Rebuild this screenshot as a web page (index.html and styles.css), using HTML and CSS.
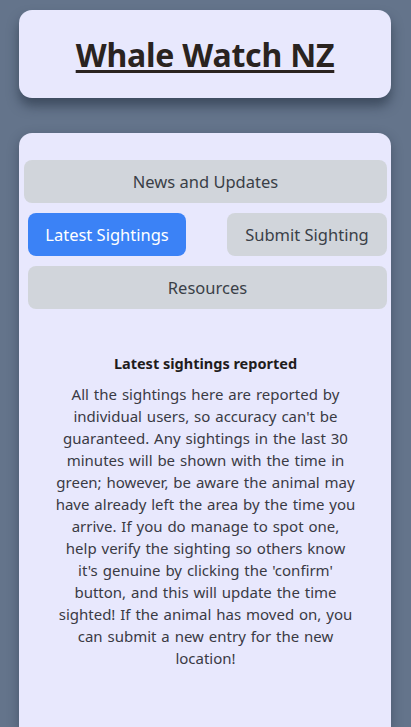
FILE: index.html
```html
<!DOCTYPE html>
<html lang="en">
<head>
<meta charset="utf-8">
<title>Whale Watch NZ</title>
<link rel="stylesheet" href="styles.css">
</head>
<body>
  <header class="card header">
    <h1 class="title">Whale Watch NZ</h1>
  </header>
  <main class="card main">
    <nav class="nav">
      <button class="btn btn-wide">News and Updates</button>
      <div class="nav-row">
        <button class="btn btn-active">Latest Sightings</button>
        <button class="btn btn-submit">Submit Sighting</button>
      </div>
      <button class="btn btn-inset">Resources</button>
    </nav>
    <section class="content">
      <h2 class="content-title">Latest sightings reported</h2>
      <p class="content-text">All the sightings here are reported by individual users, so accuracy can't be guaranteed. Any sightings in the last 30 minutes will be shown with the time in green; however, be aware the animal may have already left the area by the time you arrive. If you do manage to spot one, help verify the sighting so others know it's genuine by clicking the 'confirm' button, and this will update the time sighted! If the animal has moved on, you can submit a new entry for the new location!</p>
    </section>
  </main>
</body>
</html>
```
FILE: styles.css
```css
* { box-sizing: border-box; }
html, body { margin: 0; padding: 0; }
body {
  background: #64748b;
  font-family: "Noto Sans", "Open Sans", sans-serif;
  color: #2a2524;
  padding: 10px 20px 0 19px;
  overflow: hidden;
  height: 727px;
}
.card {
  background: #e8e8fd;
  border-radius: 13px;
}
.header {
  height: 88px;
  display: flex;
  align-items: center;
  justify-content: center;
  box-shadow: 0 8px 12px rgba(30, 41, 59, 0.55);
}
.title {
  margin: 0;
  font-size: 32px;
  font-weight: 700;
  text-decoration: underline;
  text-decoration-thickness: 3px;
  text-underline-offset: 3px;
  color: #2a2320;
  letter-spacing: -0.2px;
}
.main {
  margin-top: 35px;
  height: 594px;
  border-radius: 13px 13px 0 0;
  padding: 27px 4px 0 5px;
  box-shadow: 0 4px 12px rgba(30, 41, 59, 0.4);
}
.nav {
  display: flex;
  flex-direction: column;
  gap: 10px;
}
.btn {
  border: none;
  height: 43px;
  border-radius: 8px;
  background: #d1d5db;
  color: #3a3f47;
  font-family: "Noto Sans", "Open Sans", sans-serif;
  font-size: 16.5px;
  padding: 0;
}
.btn-wide { width: 100%; }
.nav-row {
  display: flex;
  justify-content: space-between;
  padding-left: 4px;
}
.btn-active {
  width: 158px;
  background: #3b82f6;
  color: #ffffff;
}
.btn-submit { width: 160px; }
.btn-inset { margin-left: 4px; }
.content {
  padding: 44px 31px 0 31px;
  text-align: center;
}
.content-title {
  margin: 0 0 10px;
  font-size: 14.5px;
  font-weight: 700;
  color: #1f1c1c;
}
.content-text {
  margin: 0;
  font-size: 15px;
  line-height: 22px;
  word-spacing: 1px;
  color: #3a3a44;
}
```
